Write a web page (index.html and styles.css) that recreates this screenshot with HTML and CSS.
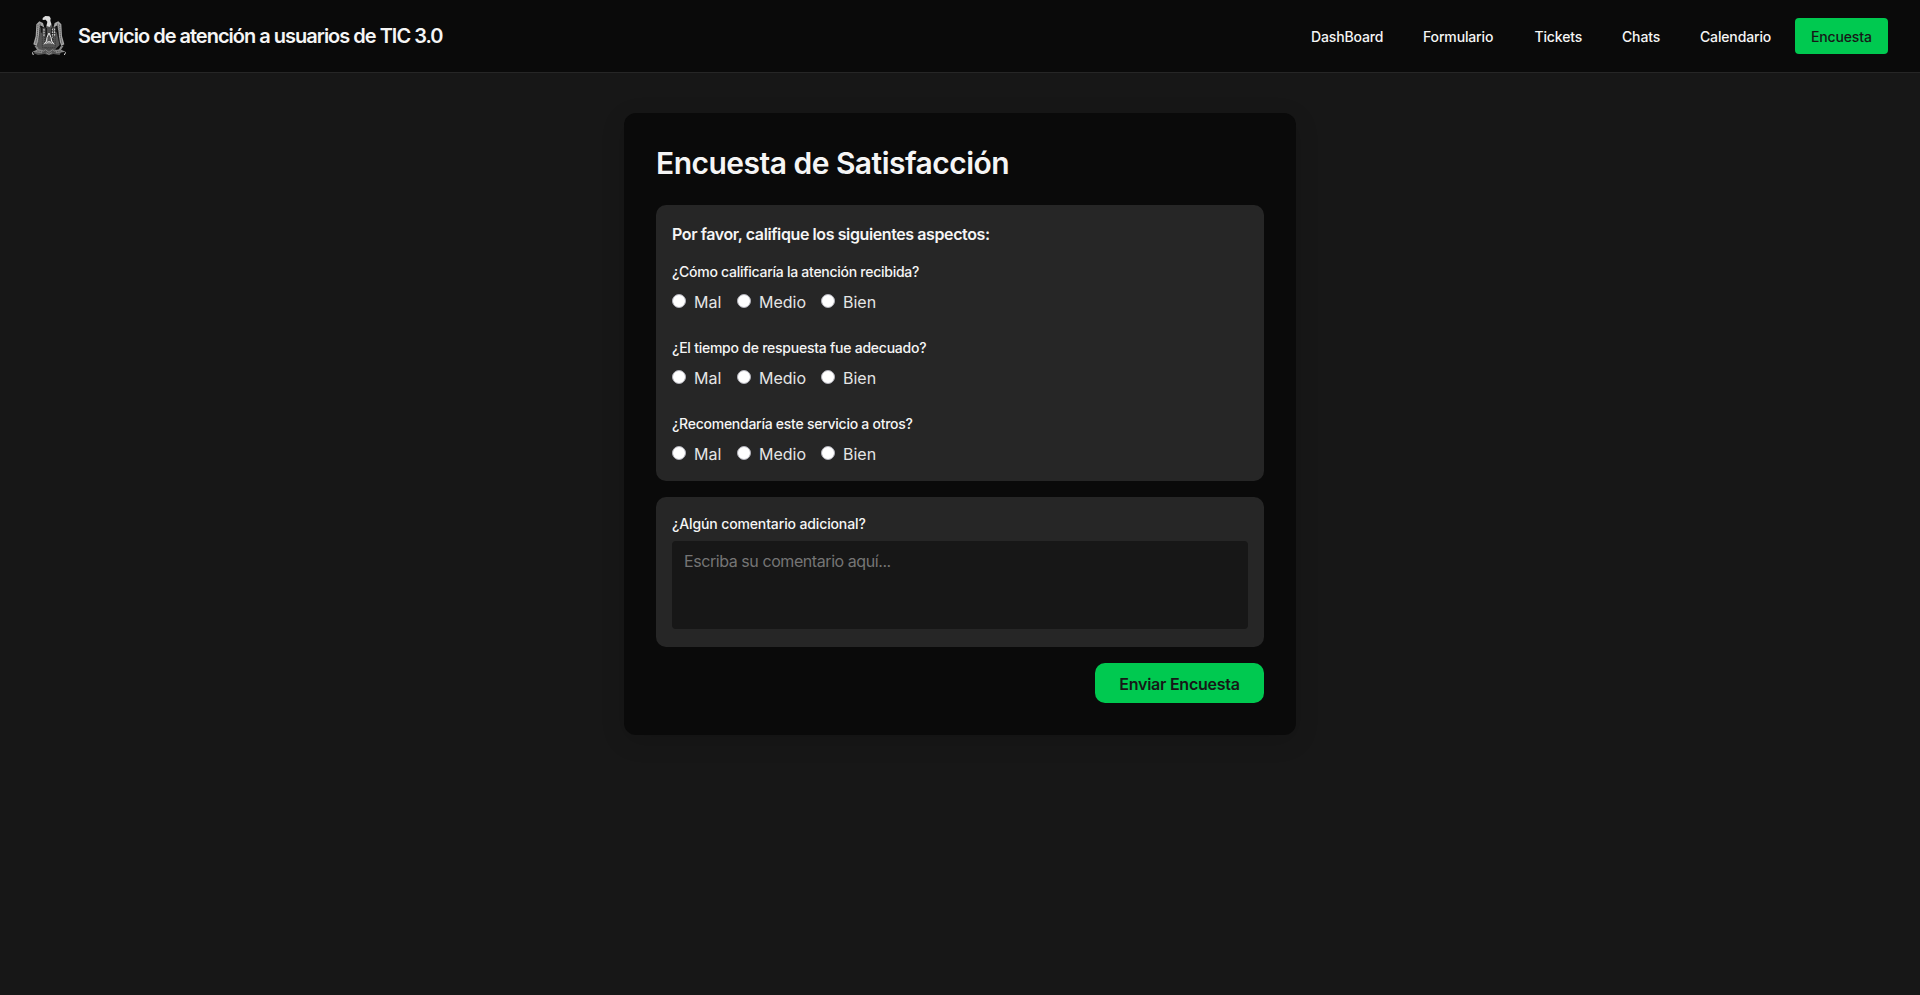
FILE: index.html
```html
<!DOCTYPE html>
<html lang="es">
<head>
<meta charset="utf-8">
<title>Encuesta de Satisfacción</title>
<link rel="stylesheet" href="styles.css">
</head>
<body>
<header class="topbar">
  <div class="brand">
    <svg class="crest" viewBox="24 24 102 120" aria-hidden="true">
      <path fill="#555" d="M68 47h15l3 12 10-3 2 15 9 40-13 13 17 8-4 9-19-3-13 4-13-4-20 3-14-6 16-12-5-10 8-55 18 3z"/>
      <path fill="#ddd" d="M56 30l8-6 12 1 4 6-1 7 3 10-5 9-9-3 2-13-5-6-9 1z"/>
      <path fill="#a6a6a6" d="M61 59l-4-14-11-5-9 9-2 35-7 25 10 5 5-13 3-31 3-18zM88 59l4-14 11-5 9 9 2 35 7 25-9 5-5-13-4-31-3-18z"/>
      <path fill="none" stroke="#333" stroke-width="3" stroke-dasharray="3 3" d="M42 50l-2 34-5 22M48 47l-2 37-5 25M107 50l2 34 5 22M101 47l2 37 5 25M62 57v50M88 57v50M75 59v22M55 76v42M94 76v42M55 119h40"/>
      <path fill="none" stroke="#171717" stroke-width="5" d="M53 56v18M67 59v43M83 59v43M96 57v16"/>
      <path fill="none" stroke="#ddd" stroke-width="3" stroke-dasharray="5 3" d="M60 63v24M85 62v27M92 62v24"/>
      <path fill="#888" stroke="#eee" stroke-width="3" d="M75 75l-6 13-1 12-8 9M75 75l6 13 2 12 7 9M66 107c5-8 13-8 18 0"/>
      <path fill="#888" d="M31 113l9 2 5 9 13 3-4 9-29-5 14-6zM119 113l-9 2-5 9-13 3 4 9 29-5-14-6z"/>
      <path fill="none" stroke="#ddd" stroke-width="3" d="M25 133l3 8M125 133l-4 8"/>
      <path fill="none" stroke="#888" stroke-width="3" d="M54 133l10-8 11 8 11-8 10 8M66 134l9 5 9-5"/>
      <path fill="none" stroke="#333" stroke-width="2" stroke-dasharray="4 3" d="M40 129l20 4M110 129l-20 4M63 119l12 5 12-5"/>
    </svg>
    <span class="brand-name">Servicio de atención a usuarios de TIC 3.0</span>
  </div>
  <nav class="nav">
    <a class="nav-link dash">DashBoard</a>
    <a class="nav-link form">Formulario</a>
    <a class="nav-link tick">Tickets</a>
    <a class="nav-link chat">Chats</a>
    <a class="nav-link cal">Calendario</a>
    <a class="nav-link active">Encuesta</a>
  </nav>
</header>
<main class="card">
  <h1 class="title">Encuesta de Satisfacción</h1>
  <form>
    <section class="panel ratings">
      <h2 class="intro">Por favor, califique los siguientes aspectos:</h2>
      <div class="question">
        <p class="label q1">¿Cómo calificaría la atención recibida?</p>
        <div class="options">
          <label class="option mal"><input type="radio" name="a" class="radio"><span>Mal</span></label>
          <label class="option medio"><input type="radio" name="a" class="radio"><span>Medio</span></label>
          <label class="option bien"><input type="radio" name="a" class="radio"><span>Bien</span></label>
        </div>
      </div>
      <div class="question">
        <p class="label q2">¿El tiempo de respuesta fue adecuado?</p>
        <div class="options">
          <label class="option mal"><input type="radio" name="b" class="radio"><span>Mal</span></label>
          <label class="option medio"><input type="radio" name="b" class="radio"><span>Medio</span></label>
          <label class="option bien"><input type="radio" name="b" class="radio"><span>Bien</span></label>
        </div>
      </div>
      <div class="question">
        <p class="label q3">¿Recomendaría este servicio a otros?</p>
        <div class="options">
          <label class="option mal"><input type="radio" name="c" class="radio"><span>Mal</span></label>
          <label class="option medio"><input type="radio" name="c" class="radio"><span>Medio</span></label>
          <label class="option bien"><input type="radio" name="c" class="radio"><span>Bien</span></label>
        </div>
      </div>
    </section>
    <section class="panel comments">
      <p class="label q4">¿Algún comentario adicional?</p>
      <textarea class="comment" placeholder="Escriba su comentario aquí..."></textarea>
    </section>
    <div class="actions"><button type="button" class="submit">Enviar Encuesta</button></div>
  </form>
</main>
</body>
</html>
```
FILE: styles.css
```css
* { box-sizing: border-box; }
body {
  margin: 0;
  min-height: 100vh;
  background: #171717;
  color: #f5f5f5;
  font: 400 16px/24px Inter, "Liberation Sans", sans-serif;
}
h1, h2, p { margin: 0; }
.topbar {
  display: flex;
  align-items: center;
  justify-content: space-between;
  height: 73px;
  padding: 0 32px;
  background: #0a0a0a;
  border-bottom: 1px solid #262626;
}
.brand { display: flex; align-items: center; gap: 12px; }
.crest { width: 34px; height: 40px; }
.brand-name { font-size: 20px; line-height: 28px; font-weight: 600; letter-spacing: -1px; white-space: nowrap; }
.nav { display: flex; gap: 8px; }
.nav-link {
  height: 36px;
  padding: 9px 0 7px 16px;
  border-radius: 4px;
  font-size: 14px;
  line-height: 20px;
  font-weight: 500;
  letter-spacing: -0.15px;
  white-space: nowrap;
}
.dash { width: 104px; }
.form { width: 103.5px; }
.tick { width: 79.5px; }
.chat { width: 70px; }
.cal { width: 103px; }
.active { width: 93px; background: #00c950; color: #171717; }
.card {
  width: 672px;
  margin: 40px auto 0;
  padding: 32px;
  border-radius: 12px;
  background: #0a0a0a;
  box-shadow: 0 6px 24px rgba(0, 0, 0, .14);
}
.title { margin-bottom: 24px; font-size: 30px; line-height: 36px; font-weight: 600; letter-spacing: -0.52px; }
.panel { padding: 16px; border-radius: 10px; background: #262626; }
.intro { margin-bottom: 16px; padding-top: 2px; font-size: 16px; line-height: 22px; font-weight: 600; letter-spacing: -0.4px; }
.question + .question { margin-top: 24px; }
.label { margin-bottom: 8px; padding-top: 2px; font-size: 14px; line-height: 18px; font-weight: 500; }
.q1 { letter-spacing: -0.27px; }
.q2 { letter-spacing: -0.24px; }
.q3 { letter-spacing: -0.26px; }
.q4 { letter-spacing: -0.13px; }
.options { display: flex; }
.option { display: flex; align-items: center; gap: 8px; height: 24px; color: #e5e5e5; }
.mal { width: 65px; }
.medio { width: 84px; }
.option span { padding-top: 1px; }
.radio {
  appearance: none;
  flex: none;
  width: 14px;
  height: 14px;
  margin: 0;
  border: 1px solid #b0b0b8;
  border-radius: 50%;
  background: #fff;
}
.comments { height: 150px; margin-top: 16px; }
.comment {
  display: block;
  width: 100%;
  height: 88px;
  padding: 8px 12px;
  border: 0;
  border-radius: 4px;
  background: #171717;
  color: #f5f5f5;
  font: inherit;
  letter-spacing: -0.43px;
  resize: none;
}
.comment::placeholder { color: #757575; }
.actions { display: flex; justify-content: flex-end; margin-top: 16px; }
.submit {
  width: 169px;
  height: 40px;
  padding: 1px 0 0;
  border: 0;
  border-radius: 10px;
  background: #00c950;
  color: #171717;
  font: 600 16px/24px Inter, "Liberation Sans", sans-serif;
  letter-spacing: -0.25px;
}
```
